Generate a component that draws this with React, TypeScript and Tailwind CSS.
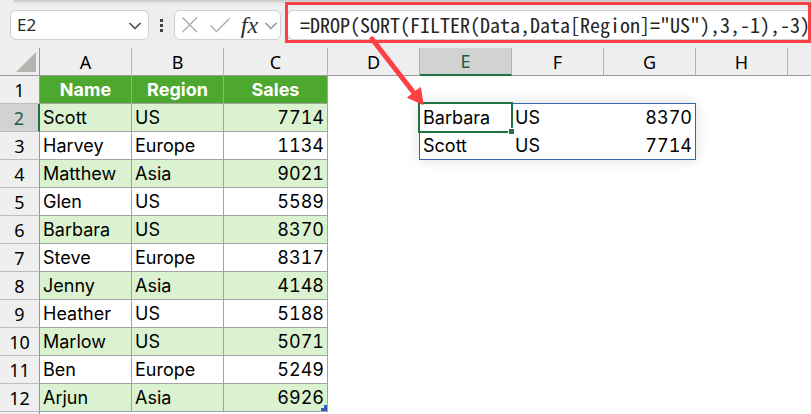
import * as React from "react";

type Person = { name: string; region: string; sales: number };

const COLUMNS = ["A", "B", "C", "D", "E", "F", "G", "H", ""];

const PEOPLE: Person[] = [
  { name: "Scott", region: "US", sales: 7714 },
  { name: "Harvey", region: "Europe", sales: 1134 },
  { name: "Matthew", region: "Asia", sales: 9021 },
  { name: "Glen", region: "US", sales: 5589 },
  { name: "Barbara", region: "US", sales: 8370 },
  { name: "Steve", region: "Europe", sales: 8317 },
  { name: "Jenny", region: "Asia", sales: 4148 },
  { name: "Heather", region: "US", sales: 5188 },
  { name: "Marlow", region: "US", sales: 5071 },
  { name: "Ben", region: "Europe", sales: 5249 },
  { name: "Arjun", region: "Asia", sales: 6926 },
];

const FORMULA = '=DROP(SORT(FILTER(Data,Data[Region]="US"),3,-1),-3)';

function RowNumber({ value, active = false }: { value: number; active?: boolean }) {
  return (
    <th
      scope="row"
      className={`h-7 border-b border-b-[#bdbdbd] p-0 text-center font-['Noto_Sans',sans-serif] text-lg leading-6 font-normal ${
        active
          ? "border-r-2 border-r-[#217346] bg-[#d2d2d2] text-[#1e5c46]"
          : "border-r border-r-[#999999] bg-[#efefef] text-black"
      }`}
    >
      {value}
    </th>
  );
}

function FormulaBar() {
  const [cell, setCell] = React.useState("E2");
  const [formula, setFormula] = React.useState(FORMULA);

  return (
    <div className="relative flex h-12 shrink-0 items-start bg-[#eeeeee] pt-2.5 pl-2.5">
      <div className="absolute top-0 right-0 left-3.5 h-1 bg-linear-to-b from-[#c6c6c6] to-[#eeeeee]" />
      <div className="flex h-[30px] w-[139px] shrink-0 items-center rounded-md border border-[#d0d0d0] bg-white px-1.5">
        <input
          aria-label="Name box"
          value={cell}
          onChange={(e) => setCell(e.target.value)}
          className="min-w-0 flex-1 font-['Noto_Sans',sans-serif] text-[17px] leading-6 text-[#262626] outline-none"
        />
        <button type="button" aria-label="Open name list" className="pt-0.5">
          <svg viewBox="0 0 14 10" className="h-2.5 w-3.5" fill="none" stroke="#444444" strokeWidth="1.5">
            <path d="M1.500 2 7 7.500 12.500 2" />
          </svg>
        </button>
      </div>
      <div className="flex h-[30px] w-[25px] shrink-0 flex-col items-center justify-center gap-0.5">
        <span className="h-[3px] w-[3px] bg-[#444444]" />
        <span className="h-[3px] w-[3px] bg-[#444444]" />
        <span className="h-[3px] w-[3px] bg-[#444444]" />
      </div>
      <div className="flex h-[30px] w-[107px] shrink-0 items-center justify-between rounded-md border border-[#d0d0d0] bg-white pr-0.5 pl-1.5">
        <button type="button" aria-label="Cancel">
          <svg viewBox="0 0 18 18" className="h-[18px] w-[18px]" fill="none" stroke="#b0b0b0" strokeWidth="1.5">
            <path d="M1.500 1.500 16 16M16 1.500 1.500 16" />
          </svg>
        </button>
        <button type="button" aria-label="Enter" className="pl-1">
          <svg viewBox="0 0 22 16" className="h-4 w-[22px]" fill="none" stroke="#b0b0b0" strokeWidth="1.5">
            <path d="M1.500 8.500 7.500 14.500 20.500 1.500" />
          </svg>
        </button>
        <button
          type="button"
          aria-label="Insert function"
          className="pl-1 font-['Liberation_Serif',serif] text-2xl leading-6 font-normal text-[#2b3036] italic"
        >
          fx
        </button>
        <button type="button" aria-label="More functions" className="pt-0.5">
          <svg viewBox="0 0 14 10" className="h-2.5 w-3.5" fill="none" stroke="#8a8a8a" strokeWidth="1.3">
            <path d="M1.500 2 7 7.500 12.500 2" />
          </svg>
        </button>
      </div>
      <input
        aria-label="Formula bar"
        value={formula}
        onChange={(e) => setFormula(e.target.value)}
        className="ml-1.5 h-[30px] min-w-0 flex-1 rounded-l-md border border-r-0 border-[#d0d0d0] bg-white pb-0.5 pl-3 font-['Noto_Sans_Mono_CJK_SC','Liberation_Mono',monospace] text-xl leading-6 text-[#262626] outline-none"
      />
      <div className="pointer-events-none absolute top-0.5 right-0 left-[285px] h-[41px] border-3 border-[#fc4044]" />
      <svg
        viewBox="0 0 60 72"
        className="pointer-events-none absolute top-9 left-[367px] z-20 h-[72px] w-[60px]"
      >
        <path d="M5 3 47 57" fill="none" stroke="#fc4044" strokeWidth="5" strokeLinecap="round" />
        <path d="M56 68.500 40.500 61.500 53.500 51.500Z" fill="#fc4044" stroke="#fc4044" strokeLinejoin="round" />
      </svg>
    </div>
  );
}

export default function App() {
  return (
    <div className="flex h-screen flex-col overflow-hidden bg-white">
      <FormulaBar />
      <table className="w-full table-fixed border-separate border-spacing-0 font-[Inter,sans-serif] text-lg leading-6 text-black tabular-nums">
        <colgroup>
          <col className="w-10" />
          <col className="w-[92px]" />
          <col className="w-[92px]" />
          <col className="w-[104px]" />
          <col className="w-[92px]" />
          <col className="w-[92px]" />
          <col className="w-[92px]" />
          <col className="w-[92px]" />
          <col className="w-[92px]" />
          <col />
        </colgroup>
        <thead>
          <tr>
            <th className="h-7 border-r border-b border-[#999999] bg-[#efefef] p-0">
              <svg viewBox="0 0 20 20" className="ml-4 h-5 w-5">
                <path d="M20 0V20H0Z" fill="#b4b4b0" />
              </svg>
            </th>
            {COLUMNS.map((letter) => (
              <th
                key={letter}
                scope="col"
                className={`h-7 border-r border-r-[#b0b0b0] p-0 text-center font-['Noto_Sans',sans-serif] text-lg leading-6 font-normal last:border-r-0 ${
                  letter === "E"
                    ? "border-b-2 border-b-[#217346] bg-[#d2d2d2] text-[#1e5c46]"
                    : "border-b border-b-[#999999] bg-[#efefef]"
                }`}
              >
                {letter}
              </th>
            ))}
          </tr>
        </thead>
        <tbody>
          <tr className="text-white">
            <RowNumber value={1} />
            {["Name", "Region", "Sales"].map((title) => (
              <th
                key={title}
                scope="col"
                className="h-7 border-r border-b border-[#a3a3a3] bg-[#4ea72e] p-0 text-center leading-6 font-bold"
              >
                {title}
              </th>
            ))}
            <td colSpan={6} />
          </tr>
          {PEOPLE.map((person, i) => {
            const cell = `h-7 border-r border-b border-[#a3a3a3] px-[3px] py-0 ${i % 2 === 0 ? "bg-[#daf2d0]" : "bg-white"}`;
            return (
              <tr key={person.name}>
                <RowNumber value={i + 2} active={i === 0} />
                <td className={cell}>{person.name}</td>
                <td className={cell}>{person.region}</td>
                <td className={`${cell} relative text-right`}>
                  {person.sales}
                  {i === PEOPLE.length - 1 ? (
                    <svg viewBox="0 0 6 6" className="absolute right-0 bottom-0 h-1.5 w-1.5">
                      <path d="M3 0H6V6H0V3H3Z" fill="#2f5db5" />
                    </svg>
                  ) : null}
                </td>
                {i === 0 ? (
                  <>
                    <td />
                    {/* spilled range E2:G3 */}
                    <td className="relative px-[3px] py-0">
                      Barbara
                      <div className="absolute -top-0.5 -left-0.5 z-10 h-[31px] w-[95px] border-2 border-[#217346]">
                        <div className="absolute -right-[3px] -bottom-[3px] h-1.5 w-1.5 border-t border-l border-white bg-[#217346]" />
                      </div>
                      <div className="pointer-events-none absolute -top-px -left-px h-[57px] w-[277px] border border-[#3a62b0] shadow-[0_0_12px_rgba(0,0,0,0.14)]" />
                    </td>
                    <td className="px-[3px] py-0">US</td>
                    <td className="px-1 py-0 text-right">8370</td>
                    <td colSpan={2} />
                  </>
                ) : null}
                {i === 1 ? (
                  <>
                    <td />
                    <td className="px-[3px] py-0">Scott</td>
                    <td className="px-[3px] py-0">US</td>
                    <td className="px-1 py-0 text-right">7714</td>
                    <td colSpan={2} />
                  </>
                ) : null}
                {i > 1 ? <td colSpan={6} /> : null}
              </tr>
            );
          })}
          <tr>
            <td className="h-7 border-r border-[#999999] bg-[#efefef] p-0" />
            <td colSpan={9} />
          </tr>
        </tbody>
      </table>
    </div>
  );
}
